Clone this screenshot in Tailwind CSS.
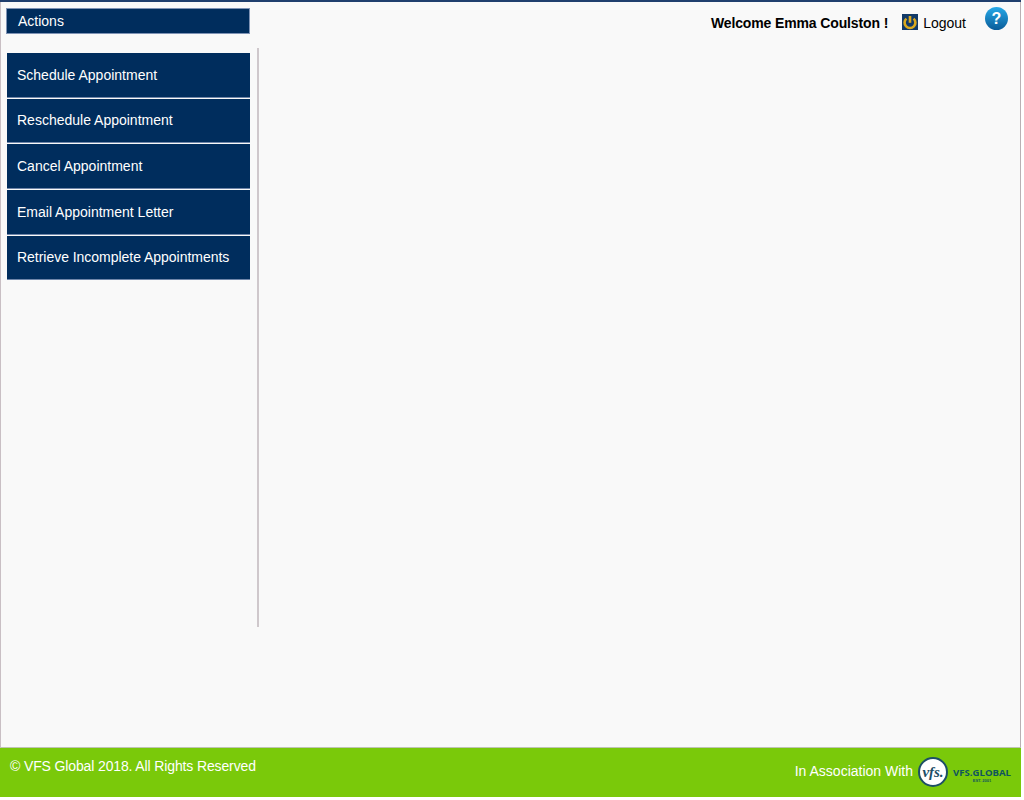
<!DOCTYPE html>
<html>
<head>
<meta charset="utf-8">
<script src="https://cdn.jsdelivr.net/npm/@tailwindcss/browser@4"></script>
</head>
<body class="m-0 bg-white">
<div class="h-[800px] w-[1024px] overflow-hidden bg-white">
<div class="flex h-[797px] w-[1021px] flex-col overflow-hidden bg-white font-['Liberation_Sans',Arial,sans-serif]">
  <div class="h-[2px] shrink-0 bg-[#1f3f6e]"></div>
  <div class="flex h-[746px] shrink-0 flex-col border-b border-l border-r border-b-[#bfc4b4] border-l-[#c9bfc4] border-r-[#b9b0b4] bg-[#f9f9f9]">
    <div class="flex h-[46px] shrink-0 items-start justify-between">
      <div class="ml-[5px] mt-[6px] flex h-[26px] w-[244px] items-center border border-[#7f93b5] bg-[#002d5d] pl-[11px] text-[14px] text-white">Actions</div>
      <div class="flex items-start">
        <span class="mt-[13px] text-[14px] font-bold leading-4 tracking-[-0.13px] text-black">Welcome Emma Coulston !</span>
        <svg class="ml-[14px] mt-[12px]" width="16" height="16" viewBox="0 0 16 16"><rect width="16" height="16" fill="#123a68"/><path d="M4.4 4.6a5.4 5.4 0 1 0 7.2 0" fill="none" stroke="#dba91e" stroke-width="2.6"/><path d="M8 2v6.8" stroke="#dba91e" stroke-width="2.6"/></svg>
        <span class="ml-[5px] mt-[13px] text-[14px] leading-4 text-black">Logout</span>
        <svg class="ml-[19px] mr-[12px] mt-[5px]" width="23" height="23" viewBox="0 0 23 23"><defs><linearGradient id="h" x1="0" y1="0" x2="0" y2="1"><stop offset="0" stop-color="#27a9e8"/><stop offset="1" stop-color="#0a5c99"/></linearGradient></defs><circle cx="11.5" cy="11.5" r="11.5" fill="url(#h)"/><text x="11.5" y="17" text-anchor="middle" font-size="16" font-weight="700" fill="#fff" font-family="Liberation Sans">?</text></svg>
      </div>
    </div>
    <div class="flex h-[579px] shrink-0 items-start">
      <nav class="ml-[6px] mt-[5px] flex w-[243px] flex-col gap-px text-[14px] text-white">
        <a class="flex h-[45px] items-center border-b border-[#6f86aa] bg-[#002d5d] pl-[10px] pt-px">Schedule Appointment</a>
        <a class="flex h-[44px] items-center border-b border-[#6f86aa] bg-[#002d5d] pl-[10px]">Reschedule Appointment</a>
        <a class="flex h-[45px] items-center border-b border-[#6f86aa] bg-[#002d5d] pl-[10px]">Cancel Appointment</a>
        <a class="flex h-[45px] items-center border-b border-[#6f86aa] bg-[#002d5d] pl-[10px]">Email Appointment Letter</a>
        <a class="flex h-[44px] items-center border-b border-[#6f86aa] bg-[#002d5d] pl-[10px] tracking-[-0.03px]">Retrieve Incomplete Appointments</a>
      </nav>
      <div class="ml-[7px] h-full w-[2px] bg-[#cfc8cc]"></div>
    </div>
    <div class="flex-1"></div>
  </div>
  <footer class="flex h-[49px] shrink-0 items-start justify-between bg-[#7ac90a] text-[14px] text-white">
    <span class="ml-[10px] mt-[10px] leading-4 tracking-[-0.13px]">© VFS Global 2018. All Rights Reserved</span>
    <div class="mr-[10px] flex items-start">
      <span class="mt-[15px] leading-4">In Association With</span>
      <div class="ml-[5px] mt-[9px] flex h-[30px] w-[30px] items-center justify-center rounded-full border-2 border-[#1d4f66] bg-white font-['Liberation_Serif',serif] text-[15px] font-bold italic leading-none text-[#1d4f66]">vfs.</div>
      <div class="ml-[5px] mt-[19px] flex w-[58px] flex-col items-center text-[#10555f]">
        <span class="font-['Open_Sans',sans-serif] text-[9.6px] font-bold leading-[11px] whitespace-nowrap">VFS.GLOBAL</span>
        <span class="text-[4px] font-bold leading-[6px]">EST. 2001</span>
      </div>
    </div>
  </footer>
</div>
</div>
</body>
</html>
